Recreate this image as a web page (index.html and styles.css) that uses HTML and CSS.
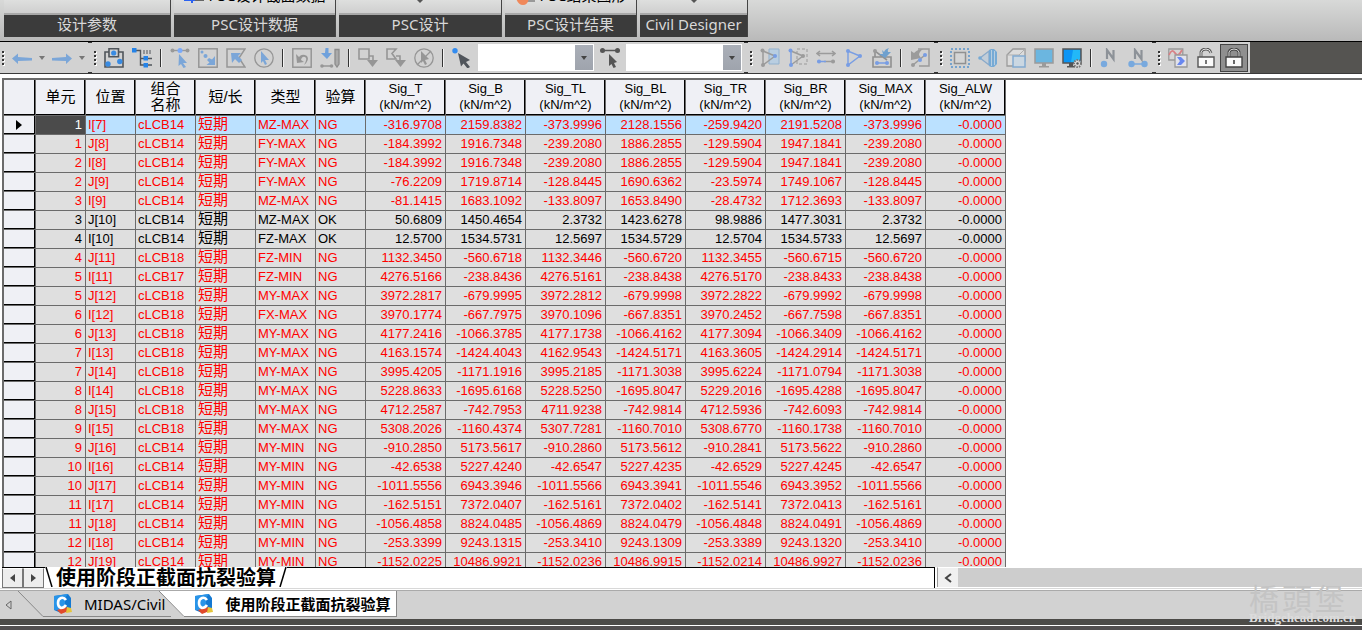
FILE: index.html
```
<!DOCTYPE html>
<html lang="zh-CN">
<head>
  <meta charset="UTF-8" />
  <meta name="viewport" content="width=device-width, initial-scale=1" />
  <title>MIDAS/Civil - 使用阶段正截面抗裂验算</title>
  <link rel="stylesheet" href="styles.css">
</head>
<body>
  <header class="ribbon">
    <section class="panel panel-params">
      <div class="panel-body"></div>
      <h2>设计参数</h2>
    </section>
    <section class="panel panel-data">
      <div class="panel-body">
        <button class="ribbon-btn" type="button">
          <svg width="20" height="16" viewBox="0 0 20 16"><path d="M0 12h20v2H0z" fill="#666"/><path d="M0 11h11v3H9v2H7v-2H0z" fill="#2c62f0"/></svg>
          PSC设计截面数据
        </button>
      </div>
      <h2>PSC设计数据</h2>
    </section>
    <section class="panel panel-design">
      <div class="panel-body"><button class="caret-btn" type="button" aria-label="PSC设计"><svg width="8" height="4" viewBox="0 0 8 4"><path d="M1 0h6L4 3z" fill="#555"/></svg></button></div>
      <h2>PSC设计</h2>
    </section>
    <section class="panel panel-result">
      <div class="panel-body">
        <button class="ribbon-btn" type="button">
          <svg width="20" height="18" viewBox="0 0 20 18"><path d="M10 12h10v3H10z" fill="#999"/><path d="M1 11h13q-1 7-6 7t-7-7" fill="#f0885a"/></svg>
          PSC结果图形
        </button>
      </div>
      <h2>PSC设计结果</h2>
    </section>
    <section class="panel panel-civil">
      <div class="panel-body"><button class="caret-btn" type="button" aria-label="Civil Designer"><svg width="8" height="4" viewBox="0 0 8 4"><path d="M1 0h6L4 3z" fill="#555"/></svg></button></div>
      <h2>Civil Designer</h2>
    </section>
  </header>

  <nav class="toolbars" aria-label="工具栏">
    <div class="toolbar">
      <span class="grip grip-first"></span>
      <button class="tool" type="button" aria-label="撤销"><svg viewBox="0 0 20 20"><path d="M0 10.500l6-5v3.500l14 1v2.500l-14 .5v3z" fill="#7ba6d8"/></svg></button>
      <button class="drop" type="button" aria-label="撤销列表"><svg viewBox="0 0 6 4"><path d="M0 0h6L3 4z"/></svg></button>
      <button class="tool" type="button" aria-label="重做"><svg viewBox="0 0 20 20"><path d="M20 10.500l-6-5v3.500l-14 1v2.500l14 .5v3z" fill="#7ba6d8"/></svg></button>
      <button class="drop" type="button" aria-label="重做列表"><svg viewBox="0 0 6 4"><path d="M0 0h6L3 4z"/></svg></button>
    </div>

    <div class="toolbar">
      <span class="grip"></span>
      <button class="tool" type="button" aria-label="选择属性"><svg viewBox="0 0 20 20"><path d="M5 4H1v15h18V4h-4M5 .800h9.500v8H5z" fill="none" stroke="#50555b" stroke-width="1.600"/><g fill="#398be2"><circle cx="9.700" cy="5" r="2.600"/><circle cx="4" cy="16" r="2.700"/><circle cx="15.800" cy="13.500" r="2.700"/></g></svg></button>
      <button class="tool" type="button" aria-label="树形选择"><svg viewBox="0 0 20 20"><path d="M4 2.500h4.500v14.500H20M8.500 10.500H20" fill="none" stroke="#50555b" stroke-width="1.400"/><path d="M12 2v4M15 2v4M18 2v4" stroke="#50555b"/><g fill="#2583e8"><path d="M0 0h4.500v4.500H0zM11.500 8h4.500v4.500h-4.500zM11.500 15h4.500v4.500h-4.500z"/></g></svg></button>
      <span class="sep"></span>
      <button class="tool" type="button" aria-label="单选"><svg viewBox="0 0 20 20"><path d="M2 2.500h16" stroke="#999" stroke-width="1.400"/><circle cx="2.500" cy="2.500" r="2" fill="#999"/><circle cx="17.500" cy="2.500" r="2" fill="#999"/><circle cx="10" cy="2.500" r="2.500" fill="#7aaafa"/><path d="M9 6l8 9h-4l3 4-2.500 1-2.500-4-2.500 2z" fill="#7ba6d8"/></svg></button>
      <button class="tool" type="button" aria-label="窗口选择"><svg viewBox="0 0 20 20"><rect x=".800" y=".800" width="18.400" height="18.400" fill="none" stroke="#969696" stroke-width="1.500"/><g fill="#7ba6d8"><circle cx="4" cy="4" r="1.500"/><circle cx="7.500" cy="8" r="2"/><path d="M17 8v9H8.500l3-2.500L9 12l2-2 3 1.500z"/></g></svg></button>
      <button class="tool" type="button" aria-label="多边形选择"><svg viewBox="0 0 20 20"><path d="M1 1h18l-6 9 6 9H1z" fill="none" stroke="#969696" stroke-width="1.500"/><path d="M5 5h10l-3 3 4 4-3 3-4-4-3 4z" fill="#7ba6d8"/></svg></button>
      <button class="tool" type="button" aria-label="圆形选择"><svg viewBox="0 0 20 20"><circle cx="10" cy="10" r="9.200" fill="none" stroke="#969696" stroke-width="1.300"/><path d="M7 3l8 9h-4l2 4-2 1-2-4-2 2z" fill="#7ba6d8"/></svg></button>
      <span class="sep"></span>
      <button class="tool" type="button" aria-label="前次选择"><svg viewBox="0 0 20 20"><rect x=".800" y=".800" width="18.400" height="18.400" fill="none" stroke="#969696" stroke-width="1.500"/><path d="M4 6l1 9 7-1-3-2q1-4 4-3t-1 8q6-5 3-9-5-3-8 1z" fill="#969696"/></svg></button>
      <button class="tool" type="button" aria-label="选择最新"><svg viewBox="0 0 20 20"><path d="M5.500 0h3v5H12l-5 6-6-6h4z" fill="#6fa1dc"/><path d="M3 18h8" stroke="#969696" stroke-width="1.500"/><circle cx="2" cy="18" r="1.800" fill="#969696"/><circle cx="11.500" cy="18" r="1.800" fill="#969696"/><path d="M15 1.500h4V16l-2 3-2-3z" fill="#aaa" stroke="#8c8c8c" stroke-width="1.300"/></svg></button>
      <span class="sep"></span>
      <button class="tool" type="button" aria-label="窗口解除"><svg viewBox="0 0 20 20"><path d="M1 1h10v10H1zM11 8h4v5" fill="none" stroke="#969696" stroke-width="1.600"/><path d="M9 12h11l-5.500 7z" fill="#969696"/></svg></button>
      <button class="tool" type="button" aria-label="多边形解除"><svg viewBox="0 0 20 20"><path d="M1 1h9L6 5.500l4 5.500H1zM10 8h4v5" fill="none" stroke="#969696" stroke-width="1.600"/><path d="M9 12h11l-5.500 7z" fill="#969696"/></svg></button>
      <button class="tool" type="button" aria-label="全部解除"><svg viewBox="0 0 20 20"><circle cx="10" cy="10" r="9.200" fill="none" stroke="#969696" stroke-width="1.300"/><path d="M7 3l8 8-4 1 2 4-2 1-2-4-2 2z" fill="#969696"/><path d="M3 17L17 3" stroke="#969696" stroke-width="1.300"/></svg></button>
      <span class="sep"></span>
      <button class="tool" type="button" aria-label="选择节点"><svg viewBox="0 0 20 20"><circle cx="3" cy="2.700" r="2.700" fill="#338cf0"/><path d="M6 5l12 7-4 2 4 5-2.500 1.500-4-5-2.500 3z" fill="#50555b"/></svg></button>
      <select class="picker" aria-label="节点号"><option></option></select>
      <button class="tool" type="button" aria-label="选择单元"><svg viewBox="0 0 20 20"><path d="M2 2.500h16" stroke="#555" stroke-width="1.500"/><circle cx="2.500" cy="2.500" r="2.500" fill="#555"/><circle cx="17.500" cy="2.500" r="2.500" fill="#555"/><path d="M9 6l8 8-3 1 2 4-2.500 1-2-4-2.500 2z" fill="#555"/></svg></button>
      <select class="picker" aria-label="单元号"><option></option></select>
    </div>

    <div class="toolbar">
      <span class="grip"></span>
      <button class="tool faded" type="button" aria-label="激活"><svg viewBox="0 0 20 20"><path d="M9 1h10v15H9z" fill="#a9cdec" stroke="#6b9dcc"/><path d="M3 3v14L15 8 3 3" fill="none" stroke="#777" stroke-width="1.500"/><circle cx="2.500" cy="2.500" r="2" fill="#777"/><circle cx="3" cy="17" r="2" fill="#777"/><circle cx="15" cy="8" r="2" fill="#3d7bf0"/></svg></button>
      <button class="tool faded" type="button" aria-label="钝化"><svg viewBox="0 0 20 20"><path d="M9 1h10v15H9z" fill="none" stroke="#777" stroke-dasharray="3 2"/><path d="M3 17L15 8 3 3" fill="none" stroke="#777" stroke-width="1.500"/><path d="M3 3v14" stroke="#3d7bf0" stroke-width="1.500"/><circle cx="2.500" cy="2.500" r="2" fill="#3d7bf0"/><circle cx="3" cy="17" r="2" fill="#3d7bf0"/><circle cx="15" cy="8" r="2" fill="#777"/></svg></button>
      <button class="tool faded" type="button" aria-label="单元激活"><svg viewBox="0 0 20 20"><path d="M1 5.500h18M4 3L1 5.500 4 8M16 3l3 2.500L16 8M8 13.500h11" stroke="#777" stroke-width="1.500" fill="none"/><path d="M1 13.500h9" stroke="#3d7bf0" stroke-width="1.500"/><circle cx="3" cy="13.500" r="2" fill="#3d7bf0"/><circle cx="17" cy="13.500" r="2" fill="#777"/></svg></button>
      <button class="tool faded" type="button" aria-label="全部激活"><svg viewBox="0 0 20 20"><path d="M4 3v14L16 8z" fill="none" stroke="#3d7bf0" stroke-width="1.400"/><circle cx="4" cy="3" r="2" fill="#3d7bf0"/><circle cx="4" cy="17" r="2" fill="#3d7bf0"/><circle cx="16" cy="8" r="2" fill="#3d7bf0"/></svg></button>
      <button class="tool faded" type="button" aria-label="激活平面"><svg viewBox="0 0 20 20"><path d="M3 9V3l12 9M1 9h18v10H1z" fill="none" stroke="#666" stroke-width="1.600"/><circle cx="3" cy="3" r="2" fill="#777"/><path d="M5 15h10" stroke="#3d7bf0" stroke-width="1.500"/><circle cx="5" cy="15" r="2" fill="#3d7bf0"/><circle cx="15" cy="15" r="2" fill="#3d7bf0"/><path d="M10 2l2 2q1-3 5-4-2 2-1 4h3l-6 6-6-4h4z" fill="#2c80cc"/></svg></button>
      <span class="sep"></span>
      <button class="tool faded" type="button" aria-label="前次激活"><svg viewBox="0 0 20 20"><path d="M8 1h11v17H9" fill="none" stroke="#777" stroke-width="1.500"/><path d="M1 3l3 2q4-4 9-4-4 3-4 6l2 3-10 2z" fill="#777"/><path d="M3 17L15 7" stroke="#777" stroke-width="1.500"/><circle cx="3" cy="17" r="2" fill="#777"/><circle cx="10" cy="12" r="2" fill="#3d7bf0"/><circle cx="15" cy="7" r="2" fill="#3d7bf0"/></svg></button>
    </div>

    <div class="toolbar">
      <span class="grip"></span>
      <button class="tool faded" type="button" aria-label="消隐边框"><svg viewBox="0 0 20 20"><rect x="1" y="1" width="18" height="18" fill="none" stroke="#3a84cc" stroke-width="2" stroke-dasharray="2 2"/><rect x="4.500" y="4.500" width="11" height="11" fill="#d8d8d8" stroke="#666" stroke-width="1.500"/></svg></button>
      <button class="tool faded" type="button" aria-label="透视"><svg viewBox="0 0 20 20"><path d="M2 10L11 3v14z" fill="#b8cbdc" stroke="#5a8fc5" stroke-width="1.300"/><path d="M11 2l2-1h3l3 3v12l-3 3h-3l-2-1z" fill="#3a90d8"/><path d="M13.500 2v16M16.500 3v14" stroke="#d8e6f2" stroke-width=".700"/><circle cx="2" cy="10" r="1.800" fill="#3a90d8"/></svg></button>
      <button class="tool faded" type="button" aria-label="消隐"><svg viewBox="0 0 20 20"><path d="M1 7l6-6h12v12l-5 5H1z" fill="#e4e4e4" stroke="#777" stroke-width="1.300"/><path d="M1 7h12v11M13 7l6-6" fill="none" stroke="#999"/><path d="M7 8h12v11H7z" fill="#c5dbee" stroke="#4f91d0" stroke-width="1.500"/></svg></button>
      <button class="tool faded" type="button" aria-label="显示"><svg viewBox="0 0 20 20"><path d="M1 1h18v14H1z" fill="#28a4ea" stroke="#777" stroke-width="1.500"/><path d="M8 15h4v3h3v1.500H5V18h3z" fill="#777"/></svg></button>
      <button class="tool" type="button" aria-label="显示选项"><svg viewBox="0 0 20 20"><path d="M1 1h18v14H1z" fill="#0c95f5" stroke="#555" stroke-width="1.500"/><path d="M11 2h7v12H9z" fill="#22b8f8"/><path d="M7 15h4v3h2v1.500H5V18h2z" fill="#555"/><circle cx="15.500" cy="15.500" r="3.500" fill="#ddd" stroke="#777" stroke-width="2" stroke-dasharray="1.500 1"/><circle cx="15.500" cy="15.500" r="1.200" fill="#555"/></svg></button>
      <span class="sep"></span>
      <button class="tool" type="button" aria-label="节点号显示"><svg viewBox="0 0 20 20"><circle cx="4" cy="16" r="3.200" fill="#78a9de"/><path d="M7 11V2l6.500 9V2" fill="none" stroke="#8d9298" stroke-width="2.200"/></svg></button>
      <button class="tool" type="button" aria-label="单元号显示"><svg viewBox="0 0 20 20"><path d="M3 16h14" stroke="#78a9de" stroke-width="1.500"/><circle cx="3.500" cy="16" r="3.200" fill="#78a9de"/><circle cx="16.500" cy="16" r="3.200" fill="#78a9de"/><path d="M7 11V2l6.500 9V2" fill="none" stroke="#8d9298" stroke-width="2.200"/></svg></button>
    </div>

    <div class="toolbar toolbar-last">
      <span class="grip"></span>
      <button class="tool" type="button" aria-label="前后处理切换"><svg viewBox="0 0 20 20"><path d="M.800 1h14v11H.800z" fill="#d6d6d6" stroke="#999" stroke-width="1.300"/><path d="M1 7q3-7 6-2t7-3" fill="none" stroke="#d98085" stroke-width="1.800"/><path d="M7 7h12v12H7z" fill="#e2e2ea" stroke="#999" stroke-width="1.300"/><path d="M9 9h4l4 4-4 4H9l3-4z" fill="#6887f0"/></svg></button>
      <button class="tool" type="button" aria-label="前处理"><svg viewBox="0 0 20 20"><path d="M5 9V4q1-3 5-3t5 4" fill="none" stroke="#555" stroke-width="2.800"/><path d="M5 9V4q1-3 5-3t5 4" fill="none" stroke="#e8e8e8"/><path d="M2 9h16v10H2z" fill="#fafafa" stroke="#555" stroke-width="1.400"/><path d="M10 12v4" stroke="#555" stroke-width="1.600"/></svg></button>
      <button class="tool active" type="button" aria-label="后处理" aria-pressed="true"><svg viewBox="0 0 20 20"><path d="M5 9V4q1-3 5-3t5 3v5" fill="none" stroke="#444" stroke-width="2.800"/><path d="M5 9V4q1-3 5-3t5 3v5" fill="none" stroke="#ddd"/><path d="M2 9h16v10H2z" fill="#fafafa" stroke="#444" stroke-width="1.400"/><path d="M10 12v4" stroke="#444" stroke-width="1.600"/></svg></button>
    </div>
  </nav>

  <main class="grid-wrap">
    <table class="grid">
      <colgroup>
        <col class="c-mark"><col class="c-50"><col class="c-50"><col class="c-60"><col class="c-60"><col class="c-60"><col class="c-50">
        <col span="8" class="c-80">
      </colgroup>
      <thead>
        <tr>
          <th></th>
          <th class="zh">单元</th>
          <th class="zh">位置</th>
          <th class="zh">组合<br>名称</th>
          <th class="zh">短/长</th>
          <th class="zh">类型</th>
          <th class="zh">验算</th>
          <th>Sig_T<br>(kN/m^2)</th>
          <th>Sig_B<br>(kN/m^2)</th>
          <th>Sig_TL<br>(kN/m^2)</th>
          <th>Sig_BL<br>(kN/m^2)</th>
          <th>Sig_TR<br>(kN/m^2)</th>
          <th>Sig_BR<br>(kN/m^2)</th>
          <th>Sig_MAX<br>(kN/m^2)</th>
          <th>Sig_ALW<br>(kN/m^2)</th>
        </tr>
      </thead>
      <tbody id="rows"></tbody>
    </table>
  </main>

  <div class="sheet-bar">
    <div class="sheets">
      <button class="sheet-nav" type="button" aria-label="上一个"><svg width="5" height="8" viewBox="0 0 5 8"><path d="M5 0v8L0 4z"/></svg></button>
      <button class="sheet-nav" type="button" aria-label="下一个"><svg width="5" height="8" viewBox="0 0 5 8"><path d="M0 0v8l5-4z"/></svg></button>
      <button class="sheet-tab" type="button">
        <svg width="8" height="20" viewBox="0 0 8 20"><path d="M1 0l6 20" stroke="#000" stroke-width="1.500"/></svg>
        使用阶段正截面抗裂验算
        <svg width="8" height="20" viewBox="0 0 8 20"><path d="M7 0L1 20" stroke="#000" stroke-width="1.500"/></svg>
      </button>
    </div>
    <div class="scrollbar">
      <button type="button" aria-label="向左滚动"><svg width="8" height="10" viewBox="0 0 8 10"><path d="M7 1L2 5l5 4" fill="none" stroke="#444" stroke-width="2"/></svg></button>
    </div>
  </div>

  <footer class="window-tabs">
    <button class="tab-scroll" type="button" aria-label="标签左移"><svg width="7" height="10" viewBox="0 0 7 10"><path d="M6 1v8L1 5z" fill="none" stroke="#666"/></svg></button>
    <button class="window-tab" type="button">
      <svg class="slant" width="25" height="26" viewBox="0 0 25 26"><path d="M0 0l25 25.500" fill="none" stroke="#888"/></svg>
      <span class="tab-face">
        <svg class="app-icon" viewBox="0 0 20 20"><path d="M1 2L15 0l3 4v11L8 19l-7-3z" fill="#1479d2"/><path d="M1 2L15 0l-3 4v12L1 16z" fill="#2994e8"/><path d="M4 16l9-3 5 3-10 4z" fill="#e04a2c"/><path d="M14 13l4 1 1 4-6 1z" fill="#e5c53c"/><path d="M13 6Q11 3 8 4 5 5 5 9t3 5q3 0 5-3" fill="none" stroke="#fff" stroke-width="2.600"/></svg>
        <span class="tab-label">MIDAS/Civil</span>
      </span>
    </button>
    <button class="window-tab current" type="button">
      <svg class="slant" width="25" height="26" viewBox="0 0 25 26"><path d="M0 0h25v26z" fill="#fff"/><path d="M0 0l25 25.500" fill="none" stroke="#888"/></svg>
      <span class="tab-face">
        <svg class="app-icon" viewBox="0 0 20 20"><path d="M1 2L15 0l3 4v11L8 19l-7-3z" fill="#1479d2"/><path d="M1 2L15 0l-3 4v12L1 16z" fill="#2994e8"/><path d="M4 16l9-3 5 3-10 4z" fill="#e04a2c"/><path d="M14 13l4 1 1 4-6 1z" fill="#e5c53c"/><path d="M13 6Q11 3 8 4 5 5 5 9t3 5q3 0 5-3" fill="none" stroke="#fff" stroke-width="2.600"/></svg>
        <span class="tab-label">使用阶段正截面抗裂验算</span>
      </span>
    </button>
  </footer>
  <div class="frame-edge"></div>

  <div class="watermark">
    <div class="mark-name"><span>橋</span><span>頭</span><span>堡</span></div>
    <div class="mark-site">Bridgehead.com.cn</div>
  </div>

  <script>
    // elem, part, load case, type, check, T, B, TL, BL, TR, BR, MAX
    const data = `
1 I[7] cLCB14 MZ-MAX NG -316.9708 2159.8382 -373.9996 2128.1556 -259.9420 2191.5208 -373.9996
1 J[8] cLCB14 FY-MAX NG -184.3992 1916.7348 -239.2080 1886.2855 -129.5904 1947.1841 -239.2080
2 I[8] cLCB14 FY-MAX NG -184.3992 1916.7348 -239.2080 1886.2855 -129.5904 1947.1841 -239.2080
2 J[9] cLCB14 FY-MAX NG -76.2209 1719.8714 -128.8445 1690.6362 -23.5974 1749.1067 -128.8445
3 I[9] cLCB14 MZ-MAX NG -81.1415 1683.1092 -133.8097 1653.8490 -28.4732 1712.3693 -133.8097
3 J[10] cLCB14 MZ-MAX OK 50.6809 1450.4654 2.3732 1423.6278 98.9886 1477.3031 2.3732
4 I[10] cLCB14 FZ-MAX OK 12.5700 1534.5731 12.5697 1534.5729 12.5704 1534.5733 12.5697
4 J[11] cLCB18 FZ-MIN NG 1132.3450 -560.6718 1132.3446 -560.6720 1132.3455 -560.6715 -560.6720
5 I[11] cLCB17 FZ-MIN NG 4276.5166 -238.8436 4276.5161 -238.8438 4276.5170 -238.8433 -238.8438
5 J[12] cLCB18 MY-MAX NG 3972.2817 -679.9995 3972.2812 -679.9998 3972.2822 -679.9992 -679.9998
6 I[12] cLCB18 FX-MAX NG 3970.1774 -667.7975 3970.1096 -667.8351 3970.2452 -667.7598 -667.8351
6 J[13] cLCB18 MY-MAX NG 4177.2416 -1066.3785 4177.1738 -1066.4162 4177.3094 -1066.3409 -1066.4162
7 I[13] cLCB18 MY-MAX NG 4163.1574 -1424.4043 4162.9543 -1424.5171 4163.3605 -1424.2914 -1424.5171
7 J[14] cLCB18 MY-MAX NG 3995.4205 -1171.1916 3995.2185 -1171.3038 3995.6224 -1171.0794 -1171.3038
8 I[14] cLCB18 MY-MAX NG 5228.8633 -1695.6168 5228.5250 -1695.8047 5229.2016 -1695.4288 -1695.8047
8 J[15] cLCB18 MY-MAX NG 4712.2587 -742.7953 4711.9238 -742.9814 4712.5936 -742.6093 -742.9814
9 I[15] cLCB18 MY-MAX NG 5308.2026 -1160.4374 5307.7281 -1160.7010 5308.6770 -1160.1738 -1160.7010
9 J[16] cLCB14 MY-MIN NG -910.2850 5173.5617 -910.2860 5173.5612 -910.2841 5173.5622 -910.2860
10 I[16] cLCB14 MY-MIN NG -42.6538 5227.4240 -42.6547 5227.4235 -42.6529 5227.4245 -42.6547
10 J[17] cLCB14 MY-MIN NG -1011.5556 6943.3946 -1011.5566 6943.3941 -1011.5546 6943.3952 -1011.5566
11 I[17] cLCB14 MY-MIN NG -162.5151 7372.0407 -162.5161 7372.0402 -162.5141 7372.0413 -162.5161
11 J[18] cLCB14 MY-MIN NG -1056.4858 8824.0485 -1056.4869 8824.0479 -1056.4848 8824.0491 -1056.4869
12 I[18] cLCB14 MY-MIN NG -253.3399 9243.1315 -253.3410 9243.1309 -253.3389 9243.1320 -253.3410
12 J[19] cLCB14 MY-MIN NG -1152.0225 10486.9921 -1152.0236 10486.9915 -1152.0214 10486.9927 -1152.0236`;

    const tbody = document.getElementById('rows');

    data.trim().split('\n').forEach((line, i) => {
      const [elem, part, comb, type, check, ...sig] = line.split(' ');
      const tr = document.createElement('tr');
      if (check === 'OK') tr.classList.add('ok');
      if (i === 0) tr.classList.add('selected');

      const mark = document.createElement('th');
      mark.scope = 'row';
      if (i === 0) {
        mark.innerHTML = '<svg width="6" height="10" viewBox="0 0 6 10"><path d="M0 0v10l6-5z"/></svg>';
      }
      tr.appendChild(mark);

      const cells = [elem, part, comb, '短期', type, check, ...sig, '-0.0000'];
      cells.forEach((text, col) => {
        const td = document.createElement('td');
        td.textContent = text;
        if (col === 0 || col > 5) td.className = 'num';
        if (col === 3) td.className = 'zh';
        tr.appendChild(td);
      });
      tbody.appendChild(tr);
    });
  </script>
</body>
</html>
```
FILE: styles.css
```
* {
  box-sizing: border-box;
}
body {
  margin: 0;
  height: 100vh;
  display: flex;
  flex-direction: column;
  overflow: hidden;
  background: #fff;
  color: #000;
  font-family: "Liberation Sans", "Noto Sans CJK SC", sans-serif;
  font-size: 13px;
}
button {
  border: none;
  background: none;
  padding: 0;
  margin: 0;
  font: inherit;
  color: inherit;
}
svg {
  display: block;
  flex: none;
}

/* ribbon */
.ribbon {
  display: flex;
  flex: none;
  gap: 3px;
  height: 41px;
  padding: 0 4px;
  background: linear-gradient(#d8d9d8, #b9b9b9);
}
.panel {
  display: flex;
  flex-direction: column;
  height: 37px;
  border-right: 1px solid #444;
}
.panel-params { width: 167px; }
.panel-data { width: 162px; }
.panel-design { width: 163px; }
.panel-result { width: 132px; }
.panel-civil { width: 108px; }
.panel-body {
  display: flex;
  justify-content: center;
  align-items: flex-start;
  height: 15px;
  overflow: hidden;
  background: linear-gradient(#dedfde, #cfcfcf);
  border-bottom: 2px solid #a8a8a8;
}
.panel h2 {
  flex: 1;
  margin: 0;
  background: #3b3b3b;
  color: #d8d8d8;
  font-family: "Noto Sans", "Noto Sans CJK SC", sans-serif;
  font-size: 15px;
  font-weight: normal;
  line-height: 18px;
  text-align: center;
  white-space: nowrap;
}
.ribbon-btn {
  display: flex;
  gap: 5px;
  margin-top: -13px;
  font-family: "Noto Sans", "Noto Sans CJK SC", sans-serif;
  font-size: 15px;
  line-height: 16px;
  white-space: nowrap;
}

/* toolbars */
.toolbars {
  display: flex;
  flex: none;
  height: 33px;
  background: #555451;
  border-top: 1px solid #000;
  border-bottom: 1px solid #3a3a3a;
}
.toolbar {
  display: flex;
  align-items: center;
  background: #d2d2d2;
}
.toolbar-last {
  padding-right: 2px;
}
.grip {
  align-self: stretch;
  width: 12px;
  background:
    linear-gradient(#333, #333) 0 0 / 4px 1px no-repeat,
    linear-gradient(#333, #333) 0 100% / 4px 1px no-repeat,
    repeating-linear-gradient(#333 0 2px, transparent 2px 4px) 6px 9px / 2px 14px no-repeat,
    repeating-linear-gradient(#fff 0 2px, transparent 2px 4px) 7px 10px / 2px 14px no-repeat;
}
.grip-first {
  width: 8px;
  background-position: -4px 0, -4px 100%, 2px 9px, 3px 10px;
}
.tool {
  display: flex;
  justify-content: center;
  align-items: center;
  width: 28px;
  height: 28px;
}
.tool svg {
  width: 20px;
  height: 20px;
}
.faded svg {
  opacity: .6;
}
.active {
  background: #8f8f8f;
  border: 1px solid #444;
}
.drop {
  display: flex;
  justify-content: center;
  width: 12px;
}
.drop svg {
  width: 6px;
  height: 4px;
  fill: #777;
}
.sep {
  width: 2px;
  height: 18px;
  margin: 0 4px;
  background: linear-gradient(90deg, #333 50%, #f2f2f2 50%);
}
.picker {
  appearance: none;
  width: 116px;
  height: 27px;
  margin: 0 2px;
  border: 1px solid #fff;
  border-radius: 0;
  background:
    url("data:image/svg+xml,%3Csvg xmlns='http://www.w3.org/2000/svg' width='6' height='4'%3E%3Cpath d='M0 0h6L3 4z' fill='%23444'/%3E%3C/svg%3E") right 6px center no-repeat,
    linear-gradient(#aaafb8, #9fa4ad) right / 18px 100% no-repeat,
    #fff;
}

/* result table */
.grid-wrap {
  flex: 1;
  min-height: 0;
  margin: 4px 0 0 2px;
  overflow: hidden;
  border-top: 2px solid #6b6b6b;
  border-left: 2px solid #6b6b6b;
}
.grid {
  width: 972px;
  table-layout: fixed;
  border-collapse: separate;
  border-spacing: 0;
}
.c-mark { width: 32px; }
.c-50 { width: 50px; }
.c-60 { width: 60px; }
.c-80 { width: 80px; }
.grid th,
.grid td {
  padding: 0;
  border-right: 1px solid #6b6b6b;
  border-bottom: 1px solid #6b6b6b;
  white-space: nowrap;
}
.grid th {
  background: #eff0f5;
  box-shadow: inset -1px -1px #000;
  font-weight: normal;
}
.grid thead th {
  height: 36px;
  padding-bottom: 2px;
  line-height: 16px;
}
.grid .zh {
  font-size: 15px;
  line-height: 16px;
}
.grid tbody th svg {
  margin-left: 12px;
}
.grid td {
  height: 19px;
  padding: 0 2px;
  overflow: hidden;
  background: #dfdfdf;
  color: #f00;
  line-height: 18px;
}
.grid td.zh {
  padding-bottom: 2px;
}
.grid .num {
  padding-right: 3px;
  text-align: right;
}
.grid .ok td {
  color: #000;
}
.grid .selected td {
  background: #bbe1ff;
}
.grid .selected td:nth-child(2) {
  background: #4b4b4b;
  color: #fff;
}

/* sheet tabs and scrollbar */
.sheet-bar {
  display: flex;
  flex: none;
  gap: 2px;
  height: 22px;
  padding-left: 2px;
  border-bottom: 1px solid #d8d8d8;
}
.sheets {
  display: flex;
  width: 933px;
  border-top: 1px solid #000;
  border-right: 1px solid #000;
}
.sheet-nav {
  display: flex;
  justify-content: center;
  align-items: center;
  width: 21px;
  height: 20px;
  background: #ededed;
  border: 1px solid #777;
  border-top-color: #fff;
}
.sheet-nav svg {
  fill: #444;
}
.sheet-tab {
  display: flex;
  gap: 3px;
  margin: -1px 0 0 1px;
  background: #fff;
  font-size: 20px;
  font-weight: bold;
  line-height: 22px;
  white-space: nowrap;
}
.scrollbar {
  display: flex;
  flex: 1;
  height: 20px;
  border-left: 1px solid #999;
  border-top: 1px solid #fff;
  background: #cdcdcd;
}
.scrollbar button {
  display: flex;
  justify-content: center;
  align-items: center;
  width: 20px;
  background: #f0f0f0;
}

/* window tabs */
.window-tabs {
  display: flex;
  flex: none;
  height: 29px;
  margin-top: 1px;
  background: #d2d2d2;
  border-top: 1px solid #aaa;
}
.tab-scroll {
  display: flex;
  align-items: center;
  width: 18px;
  padding-left: 5px;
}
.window-tab {
  display: flex;
  height: 26px;
}
.tab-face {
  display: flex;
  align-items: center;
  gap: 11px;
  height: 26px;
  padding: 0 6px 0 10px;
  border-bottom: 1px solid #888;
  font-family: "Noto Sans", "Noto Sans CJK SC", sans-serif;
  font-size: 15px;
  line-height: 22px;
}
.app-icon {
  width: 20px;
  height: 20px;
}
.window-tab.current {
  position: relative;
  margin-left: -12px;
  font-weight: bold;
}
.current .tab-face {
  background: #fff;
  border-right: 1px solid #888;
}
.frame-edge {
  flex: none;
  height: 11px;
  background: linear-gradient(#4c4b48 6px, #fff 6px 7px, #524f50 7px);
}

/* overlay in the lower right corner */
.watermark {
  position: absolute;
  right: 6px;
  bottom: 5px;
  color: #c4c4c4;
  pointer-events: none;
}
.mark-name {
  display: flex;
  gap: 3px;
  font-family: "Noto Sans CJK TC", serif;
  font-size: 30px;
  line-height: 28px;
}
.mark-site {
  color: #dcdcdc;
  font-family: "Liberation Serif", serif;
  font-size: 13px;
  font-weight: bold;
  line-height: 14px;
}
```
